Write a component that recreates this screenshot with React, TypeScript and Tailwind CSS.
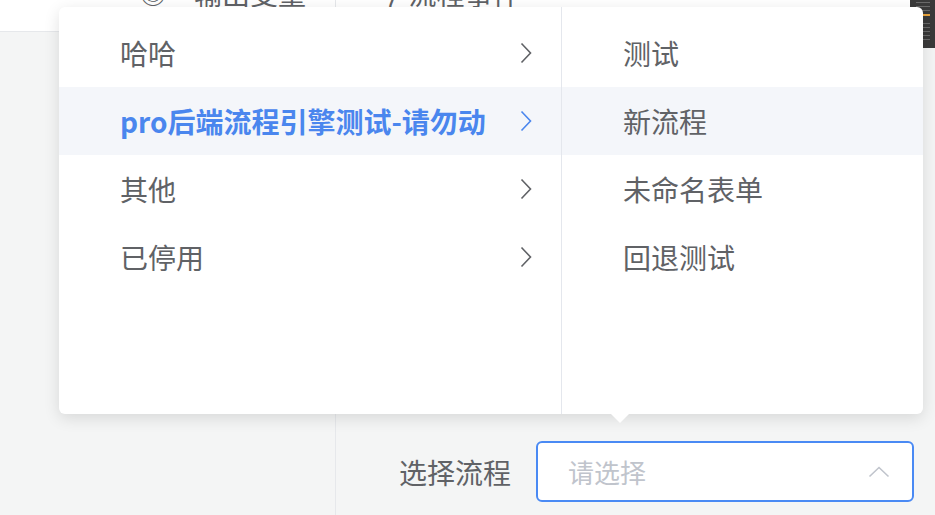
const groups = ["哈哈", "pro后端流程引擎测试-请勿动", "其他", "已停用"];
const flows = ["测试", "新流程", "未命名表单", "回退测试"];

const font = { fontFamily: '"Noto Sans CJK SC", "Noto Sans", sans-serif' };

function Chevron({ className }: { className?: string }) {
  return (
    <svg className={className} width="12" height="22" viewBox="0 0 12 22" fill="none" stroke="currentColor">
      <path d="M1.5 1.5 L10.5 11 L1.5 20.5" strokeWidth="1.6" strokeLinejoin="miter" />
    </svg>
  );
}

export default function App() {
  const activeGroup = 1;
  const hoverFlow = 1;

  return (
    <div
      className="relative w-[935px] h-[515px] overflow-hidden bg-[#f4f5f5] text-[#606266]"
      style={font}
    >
      {/* Header strip, mostly hidden behind the popover */}
      <div className="flex h-8 bg-white border-b border-[#e6e8eb]">
        <div className="w-[335px] flex items-start pl-[140px] gap-[28px]">
          <span className="-mt-[20px] text-[26px] leading-[26px]">◎</span>
          <span className="-mt-[20px] text-[28px] leading-[26px]">输出变量</span>
        </div>
        <div className="flex-1 flex items-start border-l border-[#e6e8eb] pl-[46px] gap-[12px]">
          <span className="-mt-[20px] text-[26px] leading-[26px]">ϟ</span>
          <span className="-mt-[20px] text-[28px] leading-[26px]">流程事件</span>
        </div>
      </div>

      {/* Body */}
      <div className="flex h-[483px]">
        <div className="w-[335px]" />
        <div className="flex-1 border-l border-[#e6e8eb] flex items-end pb-[13px]">
          <div className="flex items-center justify-end w-full pr-[21px]">
            <div className="mr-[25px] text-[28px] text-[#606266]">选择流程</div>
            <div className="w-[378px] h-[61px] rounded-[6px] border-2 border-[#4a8af4] bg-white flex items-center justify-between pl-[30px] pr-[22px]">
              <span className="text-[26px] text-[#c0c4cc]">请选择</span>
              <svg width="22" height="12" viewBox="0 0 22 12" fill="none" stroke="#c0c4cc">
                <path d="M1.5 10.5 L11 1.5 L20.5 10.5" strokeWidth="1.6" />
              </svg>
            </div>
          </div>
        </div>
      </div>

      {/* Scroll thumb widget at top-right */}
      <div className="absolute right-0 top-0 w-[25px] h-[48px] bg-[#3a3a3a] rounded-bl-[3px] flex flex-col items-center gap-[3px] pt-[2px]">
        <div className="w-[14px] h-px bg-[#6a6a6a]" />
        <div className="w-[14px] h-px bg-[#6a6a6a]" />
        <div className="w-[14px] h-px bg-[#6a6a6a]" />
        <div className="w-[14px] h-[2px] bg-[#e8a33c]" />
        <div className="w-[14px] h-px bg-[#6a6a6a] mt-[4px]" />
        <div className="w-[14px] h-px bg-[#6a6a6a]" />
        <div className="w-[14px] h-px bg-[#6a6a6a]" />
        <div className="w-[14px] h-px bg-[#6a6a6a]" />
        <div className="w-[14px] h-px bg-[#6a6a6a]" />
      </div>

      {/* Cascader popover */}
      <div className="absolute left-[59px] top-[7px] w-[864px] h-[407px] bg-white rounded-[6px] shadow-[0_4px_16px_rgba(0,0,0,0.12)] flex">
        <ul className="w-[503px] pt-[12px] border-r border-[#e4e7ed]">
          {groups.map((g, i) => (
            <li
              key={g}
              className={
                "h-[68px] flex items-center justify-between pl-[61px] pr-[29px] text-[28px] leading-none " +
                (i === activeGroup ? "bg-[#f4f6fa] text-[#4a86ee] font-bold" : "text-[#606266]")
              }
            >
              <span>{g}</span>
              <Chevron className={i === activeGroup ? "text-[#4a86ee]" : "text-[#606266]"} />
            </li>
          ))}
        </ul>
        <ul className="flex-1 pt-[12px]">
          {flows.map((f, i) => (
            <li
              key={f}
              className={
                "h-[68px] flex items-center pl-[61px] text-[28px] leading-none text-[#606266] " +
                (i === hoverFlow ? "bg-[#f4f6fa]" : "")
              }
            >
              {f}
            </li>
          ))}
        </ul>
        {/* arrow */}
        <div className="absolute left-[552px] -bottom-[9px] w-0 h-0 border-l-[9px] border-r-[9px] border-t-[9px] border-l-transparent border-r-transparent border-t-white" />
      </div>
    </div>
  );
}
